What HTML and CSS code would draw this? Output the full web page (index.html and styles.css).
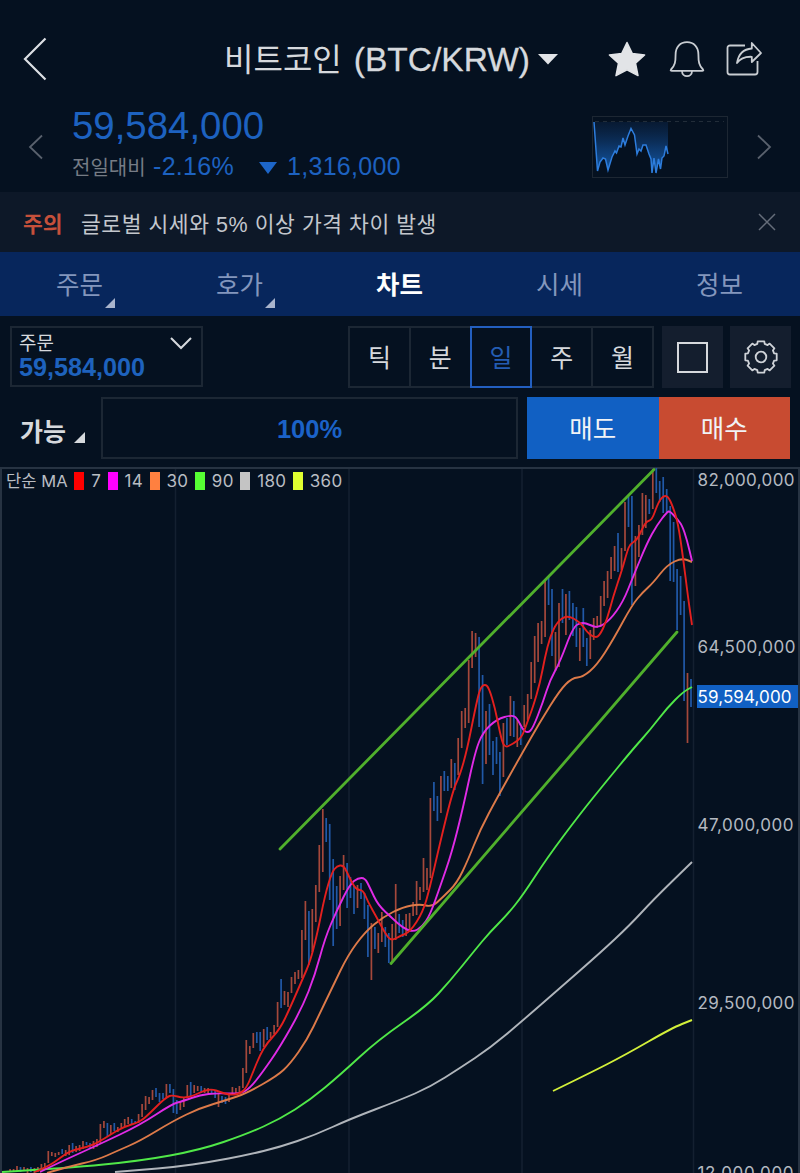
FILE: index.html
```html
<!DOCTYPE html>
<html lang="ko">
<head>
  <meta charset="UTF-8" />
  <title>비트코인 (BTC/KRW)</title>
  <link rel="stylesheet" href="styles.css">
</head>
<body>
  <header class="header">
    <svg class="back" width="24" height="44" viewBox="0 0 24 44"><path d="M22.5 1.500 2 22l20.500 20.500" /></svg>
    <h1 class="title"><span class="title-ko">비트코인</span> <span class="title-pair">(BTC/KRW)</span></h1>
    <svg class="caret" width="20" height="11" viewBox="0 0 20 11"><path d="M0 0h20L10 10.500z" /></svg>
    <svg class="star" width="38" height="36" viewBox="0 0 38 36"><path d="M19 1.500 24.200 12.400 36.600 13.900 27.500 22.200 30 34.600 19 28.800 8 34.600 10.500 22.200 1.400 13.900 13.800 12.400z" /></svg>
    <svg class="bell" width="36" height="38" viewBox="0 0 36 38">
      <path d="M2 29.500C6 25.500 6.600 22 6.600 14.500 6.600 7 11 2.200 18 2.200S29.400 7 29.400 14.500c0 7.500.6 11 4.600 15 .8.9.2 1.300-.8 1.300H2.800c-1 0-1.600-.4-.8-1.300z" />
      <path d="M13 31c0 6.800 10 6.800 10 0" />
    </svg>
    <svg class="share" width="36" height="36" viewBox="0 0 36 36">
      <path d="M19 4.500H4a2.500 2.500 0 0 0-2.500 2.500v24A2.500 2.500 0 0 0 4 33.500h25a2.500 2.500 0 0 0 2.500-2.500V20" />
      <path d="M11 22c1.500-9 7-14 14.800-14.500V2L35 12l-9.200 9v-5.200C19.500 15.500 14.500 17 11 22z" />
    </svg>
  </header>

  <section class="quote">
    <svg class="arrow" width="16" height="26" viewBox="0 0 16 26"><path d="M14 1.500 2 13l12 11.500" /></svg>
    <div class="quote-info">
      <div class="price">59,584,000</div>
      <div class="change">
        <span class="change-label">전일대비</span>
        <span class="change-rate">-2.16%</span>
        <svg width="18" height="12" viewBox="0 0 18 12"><path d="M0 0h18L9 12z" /></svg>
        <span>1,316,000</span>
      </div>
    </div>
    <svg class="spark" width="136" height="62" viewBox="0 0 136 62">
      <defs>
        <linearGradient id="sparkFill" x1="0" y1="0" x2="0" y2="1">
          <stop offset="0" stop-color="#0a2345" stop-opacity=".5" />
          <stop offset=".5" stop-color="#0d3668" />
          <stop offset="1" stop-color="#1459a6" />
        </linearGradient>
      </defs>
      <rect class="spark-frame" x=".5" y=".5" width="135" height="61" />
      <path class="spark-base" d="M3 5.500H132" />
      <path class="spark-area" d="M2 6 5.500 55 8 46 11 42 13.500 43 16 54 20 41 23 35 24.500 37 27 30 29 31 31 22 33 29 36 20 39 12.500 42.500 19 45 38 47 33 49 35 51 29 54 29 57 38 59 43 60 57 62 42 64 57 66.500 43 68.500 53 70 42 72 40 74 30 76 38V6z" />
      <path class="spark-line" d="M2 6 5.500 55 8 46 11 42 13.500 43 16 54 20 41 23 35 24.500 37 27 30 29 31 31 22 33 29 36 20 39 12.500 42.500 19 45 38 47 33 49 35 51 29 54 29 57 38 59 43 60 57 62 42 64 57 66.500 43 68.500 53 70 42 72 40 74 30 76 38" />
    </svg>
    <svg class="arrow" width="16" height="26" viewBox="0 0 16 26"><path d="M2 1.500 14 13 2 24.500" /></svg>
  </section>

  <div class="notice">
    <strong>주의</strong>
    <span class="notice-text">글로벌 시세와 5% 이상 가격 차이 발생</span>
    <svg width="18" height="18" viewBox="0 0 18 18"><path d="M1 1 17 17M17 1 1 17" /></svg>
  </div>

  <nav class="tabs">
    <a class="tab has-menu">주문</a>
    <a class="tab has-menu">호가</a>
    <a class="tab active">차트</a>
    <a class="tab">시세</a>
    <a class="tab">정보</a>
  </nav>

  <div class="toolbar">
    <div class="order-select">
      <div>
        <div class="order-label">주문</div>
        <div class="order-price">59,584,000</div>
      </div>
      <svg width="22" height="13" viewBox="0 0 22 13"><path d="M1 1 11 11 21 1" /></svg>
    </div>
    <div class="periods">
      <span class="period">틱</span>
      <span class="period">분</span>
      <span class="period selected">일</span>
      <span class="period">주</span>
      <span class="period">월</span>
    </div>
    <div class="tool"><span class="square"></span></div>
    <div class="tool">
      <svg id="gear" width="36" height="36" viewBox="-18 -18 36 36"><circle r="5.300" /></svg>
    </div>
  </div>

  <div class="trade">
    <div class="available">가능</div>
    <div class="ratio">100%</div>
    <div class="sell">매도</div>
    <div class="buy">매수</div>
  </div>

  <main class="chart">
    <div class="legend">
      <span>단순 MA</span>
      <i class="ma7"></i><span>7</span>
      <i class="ma14"></i><span>14</span>
      <i class="ma30"></i><span>30</span>
      <i class="ma90"></i><span>90</span>
      <i class="ma180"></i><span>180</span>
      <i class="ma360"></i><span>360</span>
    </div>
    <svg id="plot" width="800" height="706" viewBox="0 467 800 706">
      <path class="grid" d="M175.500 468V1173M349 468V1173M522 468V1173M693.500 468V1173" />
      <path class="frame" d="M1 1173V468H799V1173" />
      <g id="candles"></g>
      <g id="averages"></g>
      <path class="trend" d="M280 849 654 469.500M391 963.500 677 632" />
      <g class="axis">
        <text x="697.500" y="486" textLength="97">82,000,000</text>
        <text x="697.500" y="653" textLength="98">64,500,000</text>
        <text x="697.500" y="831" textLength="96">47,000,000</text>
        <text x="697.500" y="1009" textLength="97">29,500,000</text>
        <text x="697.500" y="1179" textLength="96">12,000,000</text>
        <rect x="697" y="685" width="101" height="23" />
        <text class="now" x="697.500" y="703" textLength="94">59,594,000</text>
      </g>
    </svg>
  </main>

  <script>
    const NS = "http://www.w3.org/2000/svg";

    // one entry per day: r = up, b = down, then top and bottom on the chart
    const days = `
      r1169-1172 r1169-1172 r1166-1171 b1167-1172 r1167-1171 r1168-1173 b1167-1172 r1168-1173 r1167-1172 r1164-1170
      r1163-1167 r1151-1163 r1152-1156 r1153-1157 r1152-1155 b1149-1154 r1150-1156 r1145-1155 b1143-1153 r1146-1152
      r1145-1151 r1141-1149 b1142-1145 b1143-1149 r1141-1149 r1139-1147 r1124-1143 r1121-1128 b1123-1136 r1125-1134
      b1123-1131 r1127-1132 r1123-1128 r1119-1127 r1117-1124 b1119-1124 b1121-1123 r1114-1123 r1104-1117 r1096-1110
      r1097-1104 r1090-1100 b1088-1097 b1093-1102 b1093-1099 r1084-1097 b1084-1093 b1089-1113 b1100-1114 r1102-1110
      r1098-1107 r1085-1098 b1082-1096 r1085-1093 r1086-1091 b1086-1093 r1088-1093 r1088-1093 b1089-1094 b1091-1098
      r1094-1107 b1096-1103 b1097-1104 r1093-1102 r1087-1095 r1088-1093 r1086-1092 r1068-1088 r1040-1073 r1046-1054
      r1033-1048 b1032-1043 b1032-1051 r1029-1047 b1027-1040 r1032-1038 r1025-1034 r1002-1027 b979-1008 r991-1005
      r992-1007 r977-993 r972-984 r970-979 r930-978 r901-940 b911-965 r909-952 r885-922 r845-892
      r809-872 b818-842 b824-900 b859-946 b886-929 r876-926 r855-890 b863-908 b877-898 b886-914
      r885-908 b883-899 b893-919 b905-957 r923-980 b927-949 r933-953 r912-942 b927-947 b933-963
      r924-963 r884-940 b914-933 b920-937 r914-936 r913-930 r902-916 r881-915 r887-900 r858-892
      r868-890 r798-878 b782-811 b796-821 r776-813 b771-791 b776-791 r759-788 b763-790 r738-775
      r711-748 r708-728 r660-723 r631-668 r633-657 b637-727 b675-784 r711-764 b704-755 b741-775
      b737-764 b752-796 r723-777 b718-745 r696-736 b701-737 r720-747 b727-745 r705-727 r694-720
      r662-699 r636-683 r623-662 r621-644 r580-637 b577-605 b589-656 r632-671 r603-667 b589-623
      r594-635 b591-620 b603-636 b607-647 r628-661 b608-647 b638-666 r630-659 r618-640 r616-628
      r596-627 r581-606 r571-598 r557-579 r546-571 b533-572 r548-570 r502-551 b495-527 b496-605
      r536-586 r525-557 r493-535 r495-528 b499-514 r469-509 b468-493 b481-502 b477-513 b489-513
      b506-581 b522-582 b569-630 b576-615 b601-701 r673-743 b679-707`.trim().split(/\s+/);

    const averages = {
      ma360: "553,1091 590,1073 625,1055 672,1028 692,1020",
      ma180: "115,1172 140,1170 175,1167 210,1162 247,1155 280,1147 315,1135 350,1119 400,1100 430,1087 460,1068 490,1048 521,1022 560,988 600,953 630,925 653,900 692,862",
      ma90: "2,1172 67,1168 140,1161 200,1150 247,1134 280,1119 310,1100 340,1075 378,1040 427,1006 450,981 475,950 490,932 507,915 523,895 547,858 580,814 605,783 633,749 650,730 667,708 683,692 692,687",
      ma30: "47,1173 67,1167 97,1160 117,1151 140,1141 173,1121 200,1108 227,1100 247,1093 277,1076 290,1064 307,1040 320,1013 332,988 348,955 365,932 383,917 403,907 420,904 432,907 443,897 457,883 468,860 480,830 497,798 520,757 540,722 560,690 572,678 583,677 597,665 613,640 632,605 643,592 653,583 667,565 682,558 692,562",
      ma14: "40,1172 50,1167 67,1159 100,1144 140,1125 172,1104 183,1101 200,1095 217,1093 240,1094 250,1088 262,1073 280,1047 302,1008 315,975 325,938 337,910 350,884 358,878 365,878 370,888 378,905 392,918 403,928 413,932 422,927 430,915 440,887 452,852 463,808 475,752 483,732 497,719 512,715 517,718 523,730 528,733 533,728 543,702 550,680 560,662 573,627 582,622 590,625 598,628 610,620 623,602 633,577 647,543 657,525 667,512 670,511 677,519 682,525 687,540 692,561",
      ma7: "35,1172 49,1166 60,1158 70,1151 87,1147 97,1143 110,1135 123,1127 140,1122 150,1113 160,1103 167,1097 172,1095 183,1098 193,1096 203,1091 212,1089 220,1092 230,1095 240,1094 247,1087 253,1072 260,1055 267,1043 280,1029 290,1008 303,978 310,962 317,935 325,895 332,872 337,866 343,865 347,872 352,883 357,890 363,890 368,902 377,918 385,933 391,941 400,936 410,932 423,912 430,887 440,843 453,790 460,775 467,750 475,710 480,688 485,684 489,688 495,708 500,733 504,748 513,744 522,737 527,723 533,707 540,683 545,657 550,637 557,622 567,615 580,622 587,632 593,637 599,637 607,620 613,597 622,570 627,552 630,544 637,540 643,527 647,521 652,520 658,503 663,496 668,496 673,507 678,523 683,557 688,597 692,625"
    };

    function addPath(parent, cls, d) {
      const path = document.createElementNS(NS, "path");
      path.setAttribute("class", cls);
      path.setAttribute("d", d);
      parent.appendChild(path);
    }

    // rounds the corners by curving through the middle of each segment
    function smooth(text) {
      const p = text.split(" ").map(s => s.split(",").map(Number));
      let d = `M${p[0]}`;
      for (let i = 1; i < p.length - 1; i++) {
        d += `Q${p[i]} ${(p[i][0] + p[i + 1][0]) / 2},${(p[i][1] + p[i + 1][1]) / 2}`;
      }
      return d + `L${p[p.length - 1]}`;
    }

    const step = 3.474, lastX = 691;
    let up = "", down = "";
    days.forEach((day, i) => {
      const [top, bottom] = day.slice(1).split("-");
      const x = (lastX - (days.length - 1 - i) * step).toFixed(1);
      const line = `M${x} ${top}V${bottom}`;
      if (day[0] === "r") up += line;
      else down += line;
    });
    addPath(document.getElementById("candles"), "up", up);
    addPath(document.getElementById("candles"), "down", down);

    for (const name in averages) {
      addPath(document.getElementById("averages"), "line " + name, smooth(averages[name]));
    }

    // settings gear, eight teeth
    let gear = "";
    for (let i = 0; i < 8; i++) {
      [[-16, 13.6], [-12, 16], [12, 16], [16, 13.6]].forEach(([deg, r]) => {
        const a = (i * 45 + deg - 90) * Math.PI / 180;
        gear += `${gear ? "L" : "M"}${(r * Math.cos(a)).toFixed(1)} ${(r * Math.sin(a)).toFixed(1)}`;
      });
    }
    addPath(document.getElementById("gear"), "gear-body", gear + "z");
  </script>
</body>
</html>
```
FILE: styles.css
```css
* {
  margin: 0;
  padding: 0;
  box-sizing: border-box;
}

body {
  width: 800px;
  height: 1173px;
  overflow: hidden;
  background: #051120;
  color: #d6d9dd;
  font-family: "Liberation Sans", "Noto Sans CJK KR", sans-serif;
}

svg {
  display: block;
  flex: none;
  fill: none;
}

.header {
  display: flex;
  align-items: center;
  height: 106px;
  padding: 12px 38px 0 23px;
}

.back {
  stroke: #dcdfe3;
  stroke-width: 2.2;
}

.title {
  display: flex;
  align-items: center;
  justify-content: space-between;
  width: 306px;
  height: 48px;
  margin-left: 177px;
  font-weight: 400;
  white-space: nowrap;
}

.title-ko {
  margin-top: -5px;
  font-size: 32px;
}

.title-pair {
  margin-top: 2px;
  font-size: 33.5px;
  -webkit-text-stroke: 0.3px #d6d9dd;
}

.caret {
  margin-left: 8px;
  fill: #e2e4e7;
}

.star {
  margin-left: 50px;
  fill: #e2e4e7;
  stroke: #e2e4e7;
  stroke-width: 1.5;
  stroke-linejoin: round;
}

.bell,
.share {
  stroke: #c9cdd2;
  stroke-width: 1.8;
  stroke-linejoin: round;
}

.bell {
  margin-left: 23px;
}

.share {
  margin-left: 21px;
}

.quote {
  display: flex;
  align-items: center;
  height: 86px;
  padding: 0 28px 4px;
}

.arrow {
  stroke: #59616d;
  stroke-width: 1.8;
}

.quote-info {
  width: 550px;
  padding-left: 28px;
  color: #1d62c0;
}

.price {
  height: 40px;
  margin-top: -1px;
  font-size: 38.4px;
  line-height: 40px;
}

.change {
  display: flex;
  align-items: center;
  height: 42px;
  font-size: 25px;
  letter-spacing: 0.3px;
}

.change svg {
  margin: 2px 10px 0 25px;
  fill: #1d66c9;
}

.change-label {
  width: 81px;
  font-size: 20px;
  letter-spacing: 0;
  color: #767c85;
}

.spark {
  margin-right: 28px;
}

.spark-frame {
  stroke: #1d2733;
}

.spark-base {
  stroke: #222d39;
  stroke-dasharray: 4 4;
}

.spark-area {
  fill: url(#sparkFill);
}

.spark-line {
  stroke: #2d7ddd;
  stroke-width: 1.5;
}

.notice {
  display: flex;
  align-items: center;
  height: 60px;
  padding: 2px 24px 0 23px;
  background: #0d1828;
  color: #c3c7cd;
  font-size: 21.5px;
}

.notice strong {
  width: 58px;
  margin-top: -2px;
  color: #c5503b;
}

.notice-text {
  margin-top: -2px;
  letter-spacing: 0.55px;
}

.notice svg {
  margin: -3px 0 0 auto;
  stroke: #656d7a;
  stroke-width: 1.5;
}

.tabs {
  display: grid;
  grid-template-columns: repeat(5, 1fr);
  height: 64px;
  background: #07265c;
}

.tab {
  position: relative;
  font-size: 25.5px;
  line-height: 66px;
  text-align: center;
  text-indent: -1px;
  color: #8396bd;
}

.tab.active {
  color: #fff;
  font-weight: 700;
}

/* corner mark of a tab that opens a menu */
.has-menu::after {
  content: "";
  position: absolute;
  right: 45px;
  bottom: 10px;
  border-bottom: 10px solid #a9b4cc;
  border-left: 10px solid transparent;
}

.toolbar {
  display: flex;
  height: 72px;
  padding: 10px 9px 0 10px;
}

.order-select {
  display: flex;
  justify-content: space-between;
  width: 193px;
  height: 61px;
  margin-right: 145px;
  padding: 4px 9px 0 7px;
  border: 2px solid #1c2734;
}

.order-select svg {
  margin-top: 5px;
  stroke: #d6d9dd;
  stroke-width: 2;
}

.order-label {
  font-size: 19px;
  line-height: 23px;
}

.order-price {
  color: #1e62bd;
  font-size: 25.2px;
  font-weight: 700;
  line-height: 25px;
}

.periods {
  display: flex;
  width: 306px;
  height: 62px;
  border: 2px solid #1c2734;
}

.period {
  flex: 1;
  border-right: 2px solid #1c2734;
  font-size: 25px;
  line-height: 60px;
  text-align: center;
}

.period:last-child {
  border-right: 0;
}

.period.selected {
  margin: -2px 0 -2px -2px;
  border: 2px solid #235fc0;
  color: #245db3;
}

.tool {
  display: flex;
  align-items: center;
  justify-content: center;
  width: 61px;
  height: 62px;
  margin-left: 7.5px;
  background: #141e2e;
}

.square {
  width: 31px;
  height: 31px;
  border: 2px solid #d6d9dd;
}

#gear {
  stroke: #cfd3d8;
  stroke-width: 1.8;
  stroke-linejoin: round;
}

.trade {
  display: flex;
  height: 79px;
  padding: 9px 9px 0 20px;
  font-size: 25.5px;
  line-height: 64px;
}

.available {
  position: relative;
  width: 81px;
  padding-top: 3px;
  font-weight: 700;
  font-size: 25px;
}

.available::after {
  content: "";
  position: absolute;
  left: 54px;
  top: 35px;
  border-bottom: 11px solid #d6d9dd;
  border-left: 11px solid transparent;
}

.ratio {
  width: 417px;
  height: 62px;
  margin-right: 9px;
  border: 2px solid #1c2734;
  color: #1b62c8;
  font-weight: 700;
  line-height: 60px;
  text-align: center;
}

.sell,
.buy {
  width: 131.5px;
  height: 62px;
  color: #f1f3f6;
  text-align: center;
}

.sell {
  background: #1160c3;
}

.buy {
  background: #c84b31;
}

.chart {
  position: relative;
  height: 706px;
}

.legend {
  position: absolute;
  top: 3px;
  left: 6px;
  display: flex;
  align-items: center;
  gap: 6.7px;
  height: 22px;
  font-family: Inter, "Noto Sans CJK KR", sans-serif;
  font-size: 17px;
  letter-spacing: 0.35px;
  line-height: 22px;
  color: #b9bdc3;
}

.legend span:first-child {
  font-size: 16.5px;
  letter-spacing: 0.1px;
}

.legend i {
  width: 10px;
  height: 18px;
}

.legend .ma7 { background: #ff0000; }
.legend .ma14 { background: #ff00ff; }
.legend .ma30 { background: #ff8040; }
.legend .ma90 { background: #55ff33; }
.legend .ma180 { background: #c4c4c4; }
.legend .ma360 { background: #e0ff30; }

.grid {
  stroke: #142030;
  stroke-width: 1.5;
}

.frame {
  stroke: #273342;
  stroke-width: 2;
}

.up,
.down {
  stroke-width: 1.7;
}

.up { stroke: #a5483b; }
.down { stroke: #2159a8; }

.line {
  stroke-width: 1.9;
}

.line.ma7 { stroke: #e3201f; }
.line.ma14 { stroke: #e02be6; }
.line.ma30 { stroke: #dd7a49; }
.line.ma90 { stroke: #50e848; }
.line.ma180 { stroke: #b0b5bb; }
.line.ma360 { stroke: #d3f03a; }

.trend {
  stroke: #50b02c;
  stroke-width: 2.8;
  stroke-linecap: round;
}

.axis text {
  fill: #b4b9c0;
  font-family: Inter, sans-serif;
  font-size: 17px;
}

.axis rect {
  fill: #1160c3;
}

.axis .now {
  fill: #fff;
}
```
